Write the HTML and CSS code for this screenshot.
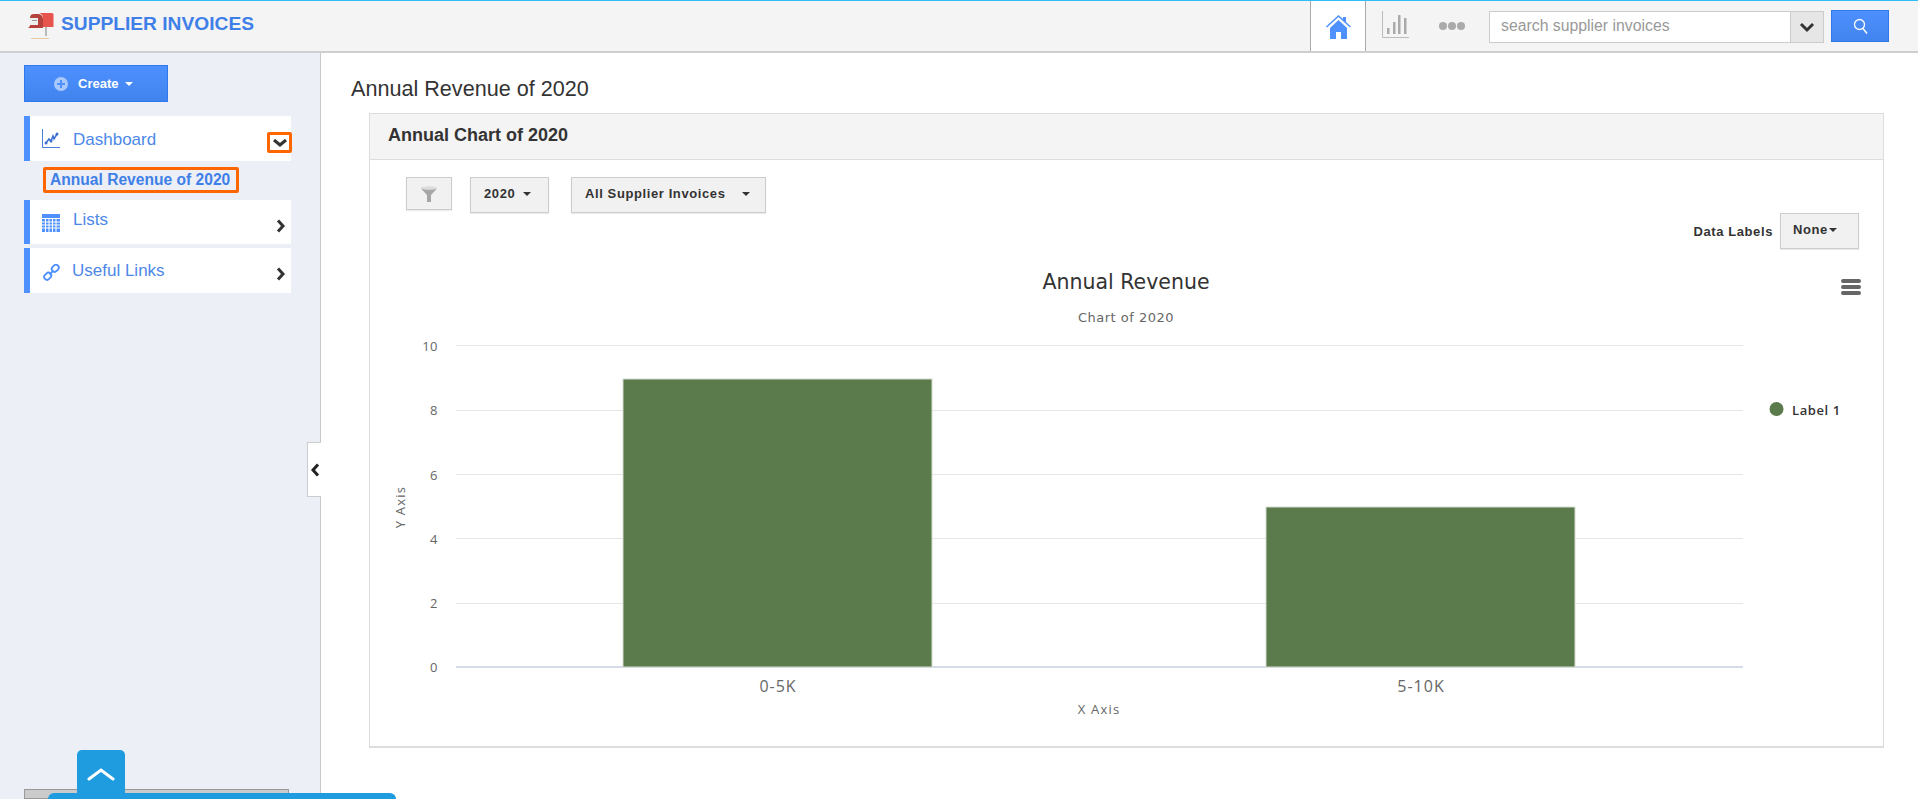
FILE: index.html
```html
<!DOCTYPE html>
<html lang="en">
<head>
    <meta charset="UTF-8">
    <title>Supplier Invoices</title>
    <link rel="stylesheet" href="styles.css">
</head>
<body>
    <!-- Top bar -->
    <div class="topbar">
        <div class="brand">
            <svg class="brand-icon" width="26" height="27" viewBox="0 0 26 27">
                <rect x="17" y="13" width="2" height="10" fill="#b9b9b9"/>
                <rect x="3" y="25" width="18" height="1" fill="#e8c9a4"/>
                <path d="M9 0h15a1.500 1.500 0 0 1 1.500 1.500V14H15V5a5 5 0 0 0-6-5z" fill="#e8554e"/>
                <path d="M6 1h3a5 5 0 0 1 6 5v9H0l2-2V5a4 4 0 0 1 4-4z" fill="#b5423c"/>
                <rect x="2" y="5" width="8" height="7" fill="#eeeeee"/>
                <rect x="4" y="7" width="5" height="1" fill="#999"/>
            </svg>
            <span class="brand-name">SUPPLIER INVOICES</span>
        </div>
        <div class="top-actions">
            <div class="home-tab">
                <svg width="25" height="25" viewBox="0 0 25 25">
                    <path d="M0 12.500 12.500 1 17 5V3h3v5l5 4.500-1 1L12.500 3 1 13.500z" fill="#4d90fe"/>
                    <path d="M4 14 12.500 6 21 14v11h-6v-7h-5v7H4z" fill="#4d90fe"/>
                </svg>
            </div>
            <div class="top-icon">
                <svg width="27" height="27" viewBox="0 0 27 27">
                    <path d="M.5 0v26.500H27" fill="none" stroke="#bbb"/>
                    <path d="M5 23v-6h2.500v6zM11 23V11h2.500v12zM16 23V4h2.500v19zM22 23V7h2.500v16z" fill="#aaa"/>
                </svg>
            </div>
            <div class="top-dots"><i></i><i></i><i></i></div>
            <div class="search">
                <div class="search-input">search supplier invoices</div>
                <div class="search-drop">
                    <svg width="16" height="11" viewBox="0 0 16 11"><path d="M2 2l6 6 6-6" fill="none" stroke="#333" stroke-width="3"/></svg>
                </div>
            </div>
            <div class="search-btn">
                <svg width="15" height="16" viewBox="0 0 15 16"><circle cx="6.500" cy="6.500" r="5" fill="none" stroke="#fff" stroke-width="1.300"/><path d="M10 10.500l4 5" stroke="#fff" stroke-width="1.500"/></svg>
            </div>
        </div>
    </div>

    <div class="layout">
        <!-- Sidebar -->
        <div class="sidebar">
            <div class="create-btn">
                <svg width="14" height="14" viewBox="0 0 14 14"><circle cx="7" cy="7" r="7" fill="#a9c8fb"/><path d="M7 3v8M3 7h8" stroke="#4d90fe" stroke-width="2"/></svg>
                <span>Create</span>
                <span class="caret caret-white"></span>
            </div>

            <div class="nav-item nav-dashboard">
                <svg class="nav-icon" width="18" height="20" viewBox="0 0 18 20">
                    <path d="M.5 0v18.500H18" fill="none" stroke="#4d7fd6"/>
                    <path d="M4 14l3-4 2 2 2-5 1 3 3-5" fill="none" stroke="#3a6fd0" stroke-width="1.500"/>
                    <circle cx="4" cy="14" r="1.500" fill="#3a6fd0"/><circle cx="9" cy="12" r="1.500" fill="#3a6fd0"/><circle cx="15" cy="5" r="1.500" fill="#3a6fd0"/>
                </svg>
                <span class="nav-label">Dashboard</span>
                <span class="toggle-box">
                    <svg width="16" height="10" viewBox="0 0 16 10"><path d="M2 2l6 5 6-5" fill="none" stroke="#333" stroke-width="3"/></svg>
                </span>
            </div>
            <div class="sub-link">Annual Revenue of 2020</div>
            <div class="nav-item nav-lists">
                <svg class="nav-icon" width="18" height="18" viewBox="0 0 18 18">
                    <rect width="18" height="18" fill="#4d90fe"/>
                    <path d="M0 4.500h18M0 8h18M0 11h18M0 14h18M3.500 4v14M7 4v14M10.500 4v14M14 4v14" stroke="#fff" stroke-width="1"/>
                </svg>
                <span class="nav-label">Lists</span>
                <svg class="nav-arrow" width="10" height="14" viewBox="0 0 10 14"><path d="M2 1.500l5 5.500-5 5.500" fill="none" stroke="#333" stroke-width="3"/></svg>
            </div>
            <div class="nav-item nav-links">
                <svg class="nav-icon" width="17" height="17" viewBox="0 0 18 18" fill="none" stroke="#4d90fe" stroke-width="2">
                    <rect x="9" y="1.500" width="8" height="6" rx="3" transform="rotate(-45 13 4.500)"/>
                    <rect x="1" y="10" width="8" height="6" rx="3" transform="rotate(-45 5 13)"/>
                    <path d="M7 11l4-4"/>
                </svg>
                <span class="nav-label">Useful Links</span>
                <svg class="nav-arrow" width="10" height="14" viewBox="0 0 10 14"><path d="M2 1.500l5 5.500-5 5.500" fill="none" stroke="#333" stroke-width="3"/></svg>
            </div>
            <div class="collapse-tab">
                <svg width="10" height="14" viewBox="0 0 10 14"><path d="M8 1.500L3 7l5 5.500" fill="none" stroke="#222" stroke-width="3"/></svg>
            </div>
        </div>

        <!-- Main content -->
        <div class="main">
            <h1>Annual Revenue of 2020</h1>
            <div class="panel">
                <div class="panel-head">Annual Chart of 2020</div>
                <div class="panel-body">
                    <div class="filters">
                        <div class="btn btn-filter">
                            <svg width="16" height="16" viewBox="0 0 16 16">
                                <path d="M0 2.500h16L10 9v7H6V9z" fill="#a6a6a6"/>
                                <ellipse cx="8" cy="2" rx="8" ry="1.800" fill="#dcdcdc"/>
                            </svg>
                        </div>
                        <div class="btn btn-year">2020 <span class="caret"></span></div>
                        <div class="btn btn-all">All Supplier Invoices <span class="caret"></span></div>
                    </div>
                    <div class="labels-row">
                        <span class="labels-text">Data Labels</span>
                        <div class="btn btn-none">None <span class="caret"></span></div>
                    </div>
                    <svg class="chart" width="1513" height="490" viewBox="369 250 1513 490">
                        <text class="chart-title" x="1126" y="289" text-anchor="middle">Annual Revenue</text>
                        <text class="chart-sub" x="1126" y="322" text-anchor="middle">Chart of 2020</text>

                        <path class="grid" d="M456 345.500H1743M456 410.500H1743M456 474.500H1743M456 538.500H1743M456 603.500H1743"/>
                        <path class="axis" d="M456 667H1743"/>

                        <rect class="bar" x="623" y="379" width="309" height="288"/>
                        <rect class="bar" x="1266" y="507" width="309" height="160"/>

                        <text class="tick" x="438" y="351" text-anchor="end">10</text>
                        <text class="tick" x="438" y="415" text-anchor="end">8</text>
                        <text class="tick" x="438" y="480" text-anchor="end">6</text>
                        <text class="tick" x="438" y="544" text-anchor="end">4</text>
                        <text class="tick" x="438" y="608" text-anchor="end">2</text>
                        <text class="tick" x="438" y="672" text-anchor="end">0</text>

                        <text class="cat" x="778" y="692" text-anchor="middle">0-5K</text>
                        <text class="cat" x="1421" y="692" text-anchor="middle">5-10K</text>
                        <text class="axis-title" x="1099" y="714" text-anchor="middle">X Axis</text>
                        <text class="axis-title" transform="translate(405 507) rotate(-90)" text-anchor="middle">Y Axis</text>

                        <path class="menu" d="M1843 281h16M1843 287h16M1843 293h16"/>
                        <circle cx="1776.500" cy="409" r="7" fill="#5b7b4c"/>
                        <text class="legend" x="1792" y="415">Label 1</text>
                    </svg>
                </div>
            </div>
        </div>
    </div>

    <!-- Bottom widgets -->
    <div class="grey-strip"></div>
    <div class="up-tab">
        <svg width="28" height="14" viewBox="0 0 28 14"><path d="M2 12L14 3l12 9" fill="none" stroke="#fff" stroke-width="3" stroke-linecap="round"/></svg>
    </div>
    <div class="blue-strip"></div>
</body>
</html>
```

FILE: styles.css
```css
html {
    height: 799px;
    overflow: hidden;
}

body {
    margin: 0;
    font-family: "Liberation Sans", Arial, sans-serif;
    background-color: #fff;
    color: #333;
    height: 799px;
    overflow: hidden;
    position: relative;
}

/* Top bar */
.topbar {
    display: flex;
    justify-content: space-between;
    height: 50px;
    background-color: #f4f4f4;
    border-top: 1px solid #2fbdf5;
    border-bottom: 2px solid #cfcfcf;
}

.brand {
    display: flex;
    align-items: flex-start;
    padding: 12px 0 0 28px;
}

.brand-name {
    margin-left: 7px;
    font-size: 19.2px;
    font-weight: bold;
    color: #3f7fe8;
}

.top-actions {
    display: flex;
    align-items: flex-start;
    height: 100%;
    padding-right: 29px;
}

.home-tab {
    display: flex;
    justify-content: center;
    align-items: center;
    flex: none;
    box-sizing: border-box;
    width: 56px;
    height: 100%;
    background-color: #fff;
    border-left: 1px solid #aaa;
    border-right: 1px solid #aaa;
}

.top-icon {
    padding: 10px 0 0 16px;
}

.top-dots {
    display: flex;
    gap: 1px;
    padding: 21px 24px 0 30px;
}

.top-dots i {
    width: 8px;
    height: 8px;
    border-radius: 50%;
    background-color: #aaa;
}

.search {
    display: flex;
    height: 30px;
    margin-top: 10px;
    border: 1px solid #ccc;
    background-color: #fff;
}

.search-input {
    width: 289px;
    padding-left: 11px;
    font-size: 15.8px;
    line-height: 28px;
    color: #999;
    white-space: nowrap;
}

.search-drop {
    display: flex;
    justify-content: center;
    align-items: center;
    width: 32px;
    background-color: #e6e6e6;
    border-left: 1px solid #ccc;
}

.search-btn {
    display: flex;
    justify-content: center;
    align-items: center;
    box-sizing: border-box;
    width: 58px;
    height: 32px;
    margin: 9px 0 0 7px;
    background: linear-gradient(#4d90fe, #4284ee);
    border: 1px solid #3079ed;
}

/* Layout */
.layout {
    display: flex;
    height: 746px;
}

.sidebar {
    position: relative;
    box-sizing: border-box;
    width: 321px;
    padding: 12px 0 0 24px;
    background-color: #eceff5;
    border-right: 1px solid #c9c9c9;
}

.create-btn {
    display: flex;
    align-items: center;
    box-sizing: border-box;
    width: 144px;
    height: 37px;
    padding-left: 29px;
    margin-bottom: 14px;
    font-size: 13px;
    font-weight: bold;
    color: #fff;
    background: linear-gradient(#4d90fe, #4284ee);
    border: 1px solid #3079ed;
}

.create-btn span:first-of-type {
    margin: 0 7px 0 10px;
}

.caret {
    display: inline-block;
    width: 0;
    height: 0;
    vertical-align: middle;
    border-top: 4px solid #333;
    border-left: 4px solid transparent;
    border-right: 4px solid transparent;
}

.caret-white {
    border-top-color: #fff;
}

/* Sidebar nav */
.nav-item {
    display: flex;
    align-items: flex-start;
    box-sizing: border-box;
    width: 267px;
    background-color: #fff;
    border-left: 6px solid #4d90fe;
    font-size: 17px;
    color: #4d88e8;
}

.nav-icon {
    flex: none;
    margin-left: 12px;
}

.nav-label {
    margin-left: 13px;
    flex: 1;
}

.nav-dashboard {
    height: 45px;
    padding-top: 13px;
    margin-bottom: 6px;
    position: relative;
}

.nav-dashboard .nav-label {
    margin-top: 1px;
}

.toggle-box {
    position: absolute;
    right: -1px;
    top: 16px;
    display: flex;
    justify-content: center;
    align-items: center;
    box-sizing: border-box;
    width: 25px;
    height: 21px;
    border: 3px solid #ff6600;
    border-radius: 2px;
}

.nav-lists {
    height: 44px;
    padding-top: 10px;
    margin-bottom: 4px;
}

.nav-lists .nav-icon {
    margin-top: 4px;
}

.nav-links {
    height: 45px;
    padding-top: 13px;
}

.nav-links .nav-icon {
    margin-top: 3px;
    margin-left: 13px;
}

.nav-links .nav-label {
    margin-left: 12px;
}

.nav-arrow {
    margin: 9px 5px 0 0;
}

.nav-links .nav-arrow {
    margin-top: 6px;
}

.sub-link {
    box-sizing: border-box;
    width: 196px;
    height: 26px;
    margin: 0 0 7px 19px;
    padding-left: 4px;
    font-size: 15.6px;
    font-weight: bold;
    line-height: 20px;
    color: #3f7fe8;
    border: 3px solid #ff6600;
    border-radius: 2px;
    white-space: nowrap;
}

.collapse-tab {
    position: absolute;
    top: 389px;
    right: -1px;
    display: flex;
    justify-content: center;
    align-items: center;
    width: 13px;
    height: 53px;
    background-color: #fff;
    border: 1px solid #ccc;
    border-right: none;
}

/* Main content */
.main {
    flex: 1;
    padding: 0 34px 0 30px;
}

h1 {
    margin: 24px 0 12px;
    font-size: 21.6px;
    font-weight: normal;
    line-height: 24px;
    color: #333;
}

.panel {
    box-sizing: border-box;
    height: 635px;
    margin-left: 18px;
    border: 1px solid #ddd;
    border-bottom-width: 2px;
}

.panel-head {
    box-sizing: border-box;
    height: 46px;
    padding-left: 18px;
    font-size: 18px;
    font-weight: bold;
    line-height: 43px;
    color: #333;
    background-color: #f4f4f4;
    border-bottom: 1px solid #ddd;
}

.panel-body {
    position: relative;
    padding: 17px 24px 0 36px;
}

.filters {
    display: flex;
    align-items: flex-start;
}

.btn {
    display: flex;
    align-items: center;
    box-sizing: border-box;
    height: 36px;
    padding-bottom: 3px;
    font-size: 13px;
    font-weight: bold;
    letter-spacing: 0.6px;
    color: #333;
    background-color: #f1f1f1;
    border: 1px solid #ccc;
    box-shadow: 0 1px 1px rgba(0, 0, 0, 0.08);
}

.btn .caret {
    margin-left: 8px;
}

.btn-filter {
    justify-content: center;
    width: 46px;
    height: 33px;
    padding-bottom: 0;
    margin-right: 18px;
}

.btn-year {
    width: 79px;
    padding-left: 13px;
    margin-right: 22px;
}

.btn-all {
    width: 195px;
    padding-left: 13px;
}

.btn-all .caret {
    margin-left: 17px;
}

.labels-row {
    display: flex;
    justify-content: flex-end;
    align-items: center;
    gap: 7px;
    font-size: 13px;
    font-weight: bold;
}

.btn-none {
    width: 79px;
    padding-left: 12px;
}

.btn-none .caret {
    margin-left: 1px;
}

.labels-text {
    letter-spacing: 0.6px;
}

/* Chart */
.chart {
    position: absolute;
    left: -1px;
    top: 90px;
    font-family: "Open Sans", sans-serif;
}

.chart-title {
    font-family: "DejaVu Sans", sans-serif;
    font-size: 20.5px;
    fill: #333;
}

.chart-sub {
    font-family: "DejaVu Sans", sans-serif;
    font-size: 13px;
    letter-spacing: 0.5px;
    fill: #666;
}

.grid {
    stroke: #e6e6e6;
    stroke-width: 1;
}

.axis {
    stroke: #d6dbe9;
    stroke-width: 2;
}

.bar {
    fill: #5b7b4c;
    stroke: #d5dccf;
    stroke-width: 1;
}

.tick {
    font-size: 13px;
    letter-spacing: 0.5px;
    fill: #666;
}

.cat {
    font-size: 16px;
    letter-spacing: 1px;
    fill: #666;
}

.axis-title {
    font-size: 13px;
    letter-spacing: 1.2px;
    fill: #666;
}

.menu {
    stroke: #666;
    stroke-width: 4;
    stroke-linecap: round;
}

.legend {
    font-size: 13px;
    font-weight: 600;
    letter-spacing: 0.6px;
    fill: #333;
}

/* Bottom widgets */
.grey-strip {
    position: absolute;
    left: 24px;
    top: 789px;
    width: 265px;
    height: 10px;
    background-color: #cbcbcb;
    border: 1px solid #999;
    box-sizing: border-box;
}

.up-tab {
    position: absolute;
    left: 77px;
    top: 750px;
    display: flex;
    justify-content: center;
    padding-top: 17px;
    box-sizing: border-box;
    width: 48px;
    height: 49px;
    background-color: #1f9ce0;
    border-radius: 5px 5px 0 0;
}

.blue-strip {
    position: absolute;
    left: 48px;
    top: 793px;
    width: 348px;
    height: 6px;
    background-color: #1f9ce0;
    border-radius: 6px 6px 0 0;
}
```
